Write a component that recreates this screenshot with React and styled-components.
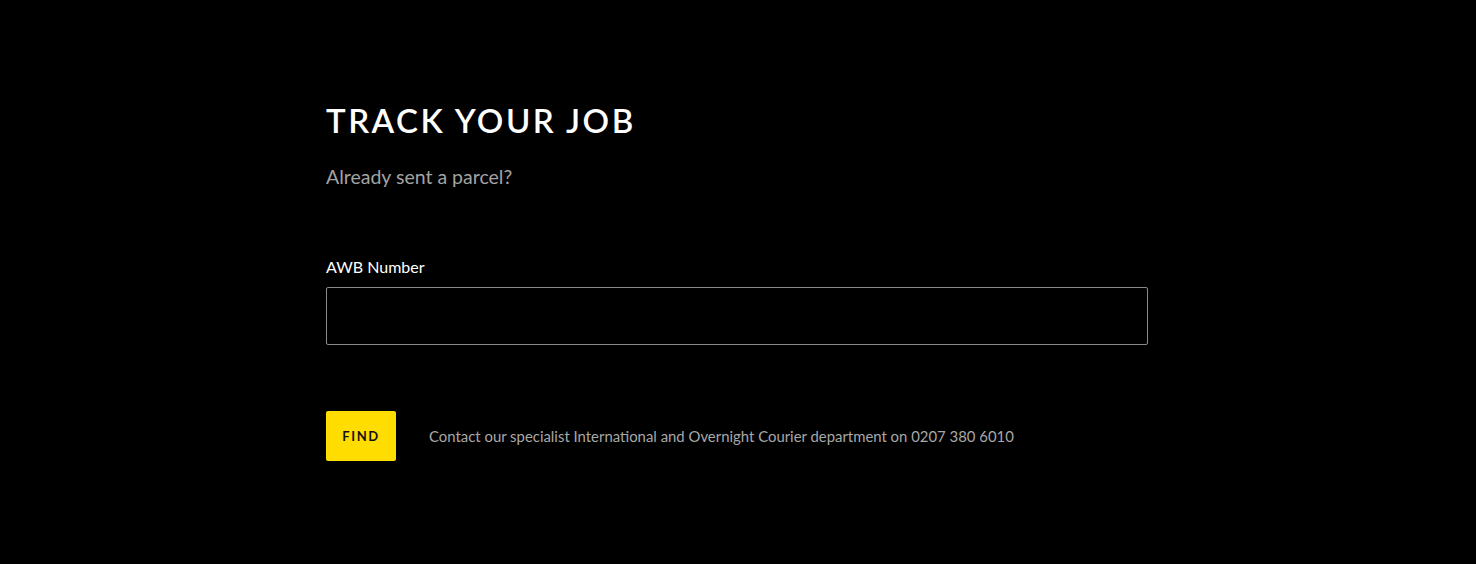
import styled, { createGlobalStyle } from 'styled-components'

const GlobalStyle = createGlobalStyle`
  html, body {
    margin: 0;
    padding: 0;
    background: #000;
  }
  body {
    font-family: Lato, "Noto Sans", "Liberation Sans", sans-serif;
    color: #fff;
  }
`

const Page = styled.main`
  min-height: 564px;
  background: #000;
  padding-top: 100px;
  box-sizing: border-box;
`

const Container = styled.section`
  width: 824px;
  padding-right: 2px;
  box-sizing: border-box;
  margin: 0 auto;
`

const Heading = styled.h1`
  margin: 0;
  font-size: 33px;
  line-height: 40px;
  font-weight: 600;
  letter-spacing: 2.5px;
  text-transform: uppercase;
  color: #fff;
`

const Lead = styled.p`
  margin: 25px 0 0;
  font-size: 19.5px;
  line-height: 24px;
  color: #a3a3a3;
`

const Field = styled.div`
  display: flex;
  flex-direction: column;
  gap: 10px;
  margin-top: 68px;
`

const Label = styled.label`
  font-size: 16px;
  line-height: 20px;
  color: #fff;
`

const Input = styled.input`
  box-sizing: border-box;
  width: 100%;
  height: 58px;
  background: #000;
  border: 1px solid #8a8a8a;
  border-radius: 2px;
  padding: 0 16px;
  font: inherit;
  font-size: 16px;
  color: #fff;
  outline: none;
`

const Actions = styled.div`
  display: flex;
  align-items: center;
  gap: 33px;
  margin-top: 66px;
`

const FindButton = styled.button`
  width: 70px;
  height: 50px;
  border: none;
  border-radius: 2px;
  background: #ffdd00;
  color: #111;
  font-family: inherit;
  font-size: 13px;
  font-weight: 700;
  letter-spacing: 1.6px;
  cursor: pointer;
`

const Note = styled.p`
  margin: 0;
  font-size: 14.9px;
  color: #a8a8a8;
`

export default function App() {
  return (
    <>
      <GlobalStyle />
      <Page>
        <Container>
          <Heading>Track your job</Heading>
          <Lead>Already sent a parcel?</Lead>
          <Field>
            <Label htmlFor="awb">AWB Number</Label>
            <Input id="awb" type="text" />
          </Field>
          <Actions>
            <FindButton type="button">FIND</FindButton>
            <Note>
              Contact our specialist International and Overnight Courier department on 0207 380 6010
            </Note>
          </Actions>
        </Container>
      </Page>
    </>
  )
}
